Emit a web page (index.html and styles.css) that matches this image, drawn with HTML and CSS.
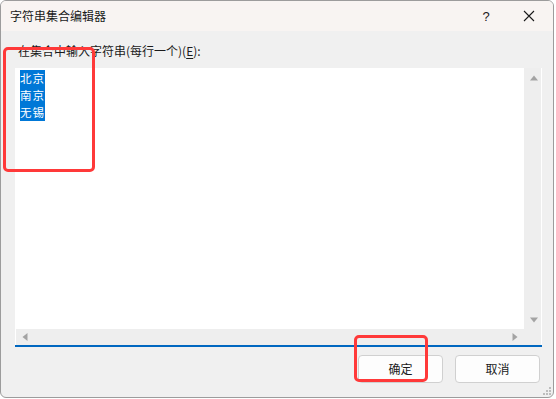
FILE: index.html
```html
<!DOCTYPE html>
<html lang="zh">
<head>
<meta charset="utf-8">
<title>字符串集合编辑器</title>
<link rel="stylesheet" href="styles.css">
</head>
<body>
<div class="window">
  <div class="titlebar">
    <span class="title">字符串集合编辑器</span>
    <span class="help">?</span>
    <span class="close">
      <svg width="12" height="12" viewBox="0 0 12 12"><path d="M1 1 L11 11 M11 1 L1 11" stroke="#1a1a1a" stroke-width="1.1" fill="none"/></svg>
    </span>
  </div>
  <div class="content">
    <div class="label">在集合中输入字符串(每行一个)(<u>E</u>):</div>
    <div class="editor">
      <div class="textarea">
        <div class="line"><span class="sel">北京</span></div>
        <div class="line"><span class="sel">南京</span></div>
        <div class="line"><span class="sel">无锡</span></div>
      </div>
      <div class="vscroll">
        <svg width="8" height="6" viewBox="0 0 8 6"><path d="M0 5.5 L4 0.5 L8 5.5 Z" fill="#a3a3a3"/></svg>
        <svg width="8" height="6" viewBox="0 0 8 6"><path d="M0 0.5 L4 5.5 L8 0.5 Z" fill="#a3a3a3"/></svg>
      </div>
      <div class="hscroll">
        <svg width="6" height="8" viewBox="0 0 6 8"><path d="M5.5 0 L0.5 4 L5.5 8 Z" fill="#a3a3a3"/></svg>
        <svg width="6" height="8" viewBox="0 0 6 8"><path d="M0.5 0 L5.5 4 L0.5 8 Z" fill="#a3a3a3"/></svg>
      </div>
      <div class="corner"></div>
    </div>
    <div class="buttons">
      <button class="btn">确定</button>
      <button class="btn">取消</button>
    </div>
    <svg class="grip" width="10" height="10" viewBox="0 0 10 10">
      <rect x="7" y="1" width="2" height="2" fill="#bdbdbd"/>
      <rect x="4" y="4" width="2" height="2" fill="#bdbdbd"/>
      <rect x="7" y="4" width="2" height="2" fill="#bdbdbd"/>
      <rect x="1" y="7" width="2" height="2" fill="#bdbdbd"/>
      <rect x="4" y="7" width="2" height="2" fill="#bdbdbd"/>
      <rect x="7" y="7" width="2" height="2" fill="#bdbdbd"/>
    </svg>
  </div>
  <div class="mark mark-list"></div>
  <div class="mark mark-ok"></div>
</div>
</body>
</html>
```

FILE: styles.css
```css
* { box-sizing: border-box; }
html, body { margin: 0; padding: 0; background: #ffffff; }
body {
  font-family: "Noto Sans CJK SC", "Noto Sans", sans-serif;
  font-size: 12px;
  color: #1a1a1a;
}
.window {
  position: relative;
  width: 554px;
  height: 398px;
  border: 1px solid #9c9c9c;
  border-radius: 6px;
  background: #f0f0f0;
  overflow: hidden;
  display: flex;
  flex-direction: column;
}
.titlebar {
  height: 30px;
  background: #f8f4f2;
  display: flex;
  align-items: center;
  padding-left: 9px;
}
.title {
  flex: 1;
  font-size: 12px;
  line-height: 16px;
}
.help {
  width: 44px;
  text-align: center;
  font-size: 13px;
  font-family: "Liberation Sans", sans-serif;
  margin-right: 1px;
}
.close {
  width: 44px;
  height: 30px;
  display: flex;
  align-items: center;
  justify-content: center;
  padding-right: 4px;
}
.close svg { display: block; }
.content {
  flex: 1;
  position: relative;
  padding: 12px 12px 0 14px;
  display: flex;
  flex-direction: column;
}
.label {
  line-height: 16px;
  padding-left: 3px;
  font-size: 12px;
}
.label u { text-underline-offset: 2px; }
.editor {
  margin-top: 9px;
  width: 527px;
  height: 279px;
  padding: 0 1px;
  background: #ffffff;
  border-bottom: 2px solid #0067c0;
  display: grid;
  grid-template-columns: 1fr 17px;
  grid-template-rows: 1fr 16px;
}
.textarea {
  background: #ffffff;
  padding: 2px 4px;
  display: flex;
  flex-direction: column;
  align-items: flex-start;
}
.line {
  height: 17px;
  display: flex;
}
.sel {
  display: block;
  background: #0078d7;
  color: #ffffff;
  height: 17px;
  font-size: 11.5px;
  letter-spacing: 1px;
  line-height: 17px;
  padding-right: 0;
}
.vscroll {
  background: #eeeeee;
  display: flex;
  flex-direction: column;
  justify-content: space-between;
  align-items: center;
  padding: 7px 0 6px 2px;
}
.vscroll svg, .hscroll svg { display: block; }
.hscroll {
  background: #eeeeee;
  display: flex;
  justify-content: space-between;
  align-items: center;
  padding: 0 6px 0 6px;
}
.corner { background: #eeeeee; }
.buttons {
  margin-top: 8px;
  display: flex;
  justify-content: flex-end;
  gap: 12px;
  padding-right: 1px;
}
.btn {
  width: 85px;
  height: 28px;
  background: #fdfdfd;
  border: 1px solid #d0d0d0;
  border-radius: 4px;
  font-family: "Noto Sans CJK SC", "Noto Sans", sans-serif;
  font-size: 12px;
  color: #1a1a1a;
  padding: 0;
  line-height: 26px;
}
.grip {
  position: absolute;
  right: 1px;
  bottom: 1px;
}
.mark {
  position: absolute;
  border: 3px solid #ff3939;
  border-radius: 5px;
}
.mark-list {
  left: 2px;
  top: 46px;
  width: 92px;
  height: 125px;
}
.mark-ok {
  left: 353px;
  top: 334px;
  width: 74px;
  height: 47px;
}
```
